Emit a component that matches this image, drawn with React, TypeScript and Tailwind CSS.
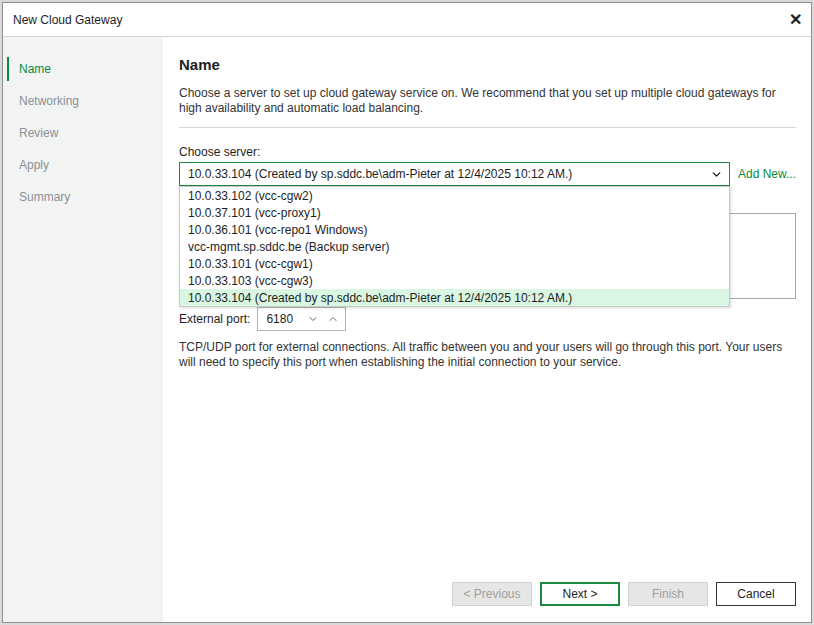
import { ChevronDown, ChevronUp } from 'lucide-react';

const steps = ['Name', 'Networking', 'Review', 'Apply', 'Summary'];

const servers = [
  '10.0.33.102 (vcc-cgw2)',
  '10.0.37.101 (vcc-proxy1)',
  '10.0.36.101 (vcc-repo1 Windows)',
  'vcc-mgmt.sp.sddc.be (Backup server)',
  '10.0.33.101 (vcc-cgw1)',
  '10.0.33.103 (vcc-cgw3)',
  '10.0.33.104 (Created by sp.sddc.be\\adm-Pieter at 12/4/2025 10:12 AM.)',
];

export default function App() {
  const font = { fontFamily: '"Liberation Sans", Arial, sans-serif' };
  return (
    <div className="w-[814px] h-[625px] bg-[#d9d9d9] p-[2px]" style={font}>
      <div className="w-[810px] h-[621px] border border-[#8e8e8e] bg-white flex flex-col text-[12px] text-[#1e1e1e]">
        {/* Title bar */}
        <div className="h-[34px] shrink-0 flex items-center justify-between pl-[10px] pr-[9px] border-b border-[#d5d5d5]">
          <span className="text-[12px]">New Cloud Gateway</span>
          <span className="text-[16px] font-bold leading-none">✕</span>
        </div>

        <div className="flex flex-1 min-h-0">
          {/* Steps */}
          <div className="w-[160px] shrink-0 bg-[#f2f4f4] pt-[20px] pl-[4px]">
            {steps.map((s, i) => (
              <div key={s} className={`h-[24px] mb-[8px] flex items-center pl-[10px] border-l-2 text-[12px] ${i === 0 ? 'border-[#0a8a3a] text-[#0a8a3a]' : 'border-transparent text-[#8b9094]'}`}>
                {s}
              </div>
            ))}
          </div>

          {/* Content */}
          <div className="flex-1 flex flex-col pl-[16px] pr-[15px] pb-[16px]">
            <h1 className="text-[15px] font-semibold mt-[18px] leading-[20px]">Name</h1>
            <p className="mt-[11px] leading-[15px] text-[#333]">
              Choose a server to set up cloud gateway service on. We recommend that you set up multiple cloud gateways for
              high availability and automatic load balancing.
            </p>
            <div className="mt-[11px] border-t border-[#d6d6d6]" />

            <div className="mt-[17px] leading-[15px]">Choose server:</div>
            <div className="mt-[2px] flex items-center gap-[8px]">
              <div className="relative w-[551px]">
                <div className="h-[24px] border border-[#1a8a40] flex items-center justify-between pl-[8px] pr-[6px]">
                  <span>10.0.33.104 (Created by sp.sddc.be\adm-Pieter at 12/4/2025 10:12 AM.)</span>
                  <ChevronDown size={13} strokeWidth={2.5} />
                </div>
                <div className="absolute left-0 top-[24px] w-full z-10 bg-white border border-[#c8c8c8] shadow-[1px_1px_3px_rgba(0,0,0,0.15)]">
                  {servers.map((s, i) => (
                    <div key={s} className={`h-[17px] flex items-center pl-[8px] ${i === servers.length - 1 ? 'bg-[#d9f6e2]' : ''}`}>
                      {s}
                    </div>
                  ))}
                </div>
              </div>
              <span className="text-[#0a8a3a]">Add New...</span>
            </div>

            <div className="mt-[27px] h-[86px] border border-[#a8a8a8]" />

            <div className="mt-[8px] flex items-center gap-[7px]">
              <span>External port:</span>
              <div className="w-[89px] h-[24px] border border-[#b5b5b5] flex items-center pl-[8px] pr-[6px]">
                <span className="flex-1">6180</span>
                <ChevronDown size={12} strokeWidth={2} className="text-[#666]" />
                <ChevronUp size={12} strokeWidth={2} className="text-[#666] ml-[8px]" />
              </div>
            </div>

            <p className="mt-[9px] leading-[15px] text-[#333]">
              TCP/UDP port for external connections. All traffic between you and your users will go through this port. Your users
              will need to specify this port when establishing the initial connection to your service.
            </p>

            <div className="mt-auto flex justify-end gap-[8px]">
              <button className="w-[80px] h-[24px] bg-[#e6e6e6] border border-[#d0d0d0] text-[#a0a0a0]">&lt; Previous</button>
              <button className="w-[80px] h-[24px] bg-white border-2 border-[#1a8a40]">Next &gt;</button>
              <button className="w-[80px] h-[24px] bg-[#e6e6e6] border border-[#d0d0d0] text-[#a0a0a0]">Finish</button>
              <button className="w-[80px] h-[24px] bg-white border border-[#333]">Cancel</button>
            </div>
          </div>
        </div>
      </div>
    </div>
  );
}
